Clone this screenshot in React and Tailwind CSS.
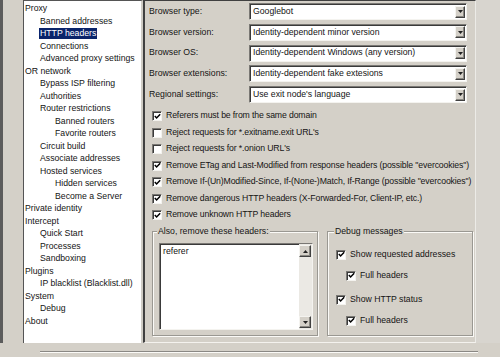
import React from "react";

// Arbol de opciones: [nivel, texto, seleccionado]
const tree = [
  [0, "Proxy"],
  [1, "Banned addresses"],
  [1, "HTTP headers", true],
  [1, "Connections"],
  [1, "Advanced proxy settings"],
  [0, "OR network"],
  [1, "Bypass ISP filtering"],
  [1, "Authorities"],
  [1, "Router restrictions"],
  [2, "Banned routers"],
  [2, "Favorite routers"],
  [1, "Circuit build"],
  [1, "Associate addresses"],
  [1, "Hosted services"],
  [2, "Hidden services"],
  [2, "Become a Server"],
  [0, "Private identity"],
  [0, "Intercept"],
  [1, "Quick Start"],
  [1, "Processes"],
  [1, "Sandboxing"],
  [0, "Plugins"],
  [1, "IP blacklist (Blacklist.dll)"],
  [0, "System"],
  [1, "Debug"],
  [0, "About"],
];

const indent = ["pl-[1px]", "pl-[16px]", "pl-[31px]"];

const selects = [
  ["Browser type:", "Googlebot"],
  ["Browser version:", "Identity-dependent minor version"],
  ["Browser OS:", "Identity-dependent Windows (any version)"],
  ["Browser extensions:", "Identity-dependent fake extesions"],
  ["Regional settings:", "Use exit node's language"],
];

const checks = [
  [true, "Referers must be from the same domain"],
  [false, "Reject requests for *.exitname.exit URL's"],
  [false, "Reject requests for *.onion URL's"],
  [true, 'Remove ETag and Last-Modified from response headers (possible "evercookies")'],
  [true, 'Remove If-(Un)Modified-Since, If-(None-)Match, If-Range (possible "evercookies")'],
  [true, "Remove dangerous HTTP headers (X-Forwarded-For, Client-IP, etc.)"],
  [true, "Remove unknown HTTP headers"],
];

const raised =
  "bg-[#d4d0c8] border border-t-[#f4f3ef] border-l-[#f4f3ef] border-r-[#404040] border-b-[#404040] shadow-[inset_-1px_-1px_0_#8a8882]";

const Check = ({ checked }) => (
  <span className="w-[10px] h-[10px] shrink-0 bg-white border border-t-[#7a7874] border-l-[#7a7874] border-r-[#f4f3ef] border-b-[#f4f3ef] shadow-[inset_1px_1px_0_#3a3a3a] flex items-center justify-center">
    {checked && (
      <svg width="7" height="7" viewBox="0 0 7 7">
        <path d="M0.8 3 L2.6 4.9 L6.2 1.2" stroke="#000" strokeWidth="1.5" fill="none" />
      </svg>
    )}
  </span>
);

const Arrow = ({ up }) => (
  <svg width="5" height="3" viewBox="0 0 5 3">
    <path d={up ? "M0 3 L2.5 0 L5 3 Z" : "M0 0 L5 0 L2.5 3 Z"} fill="#222" />
  </svg>
);

const Select = ({ value }) => (
  <div className="w-[218px] h-[17px] bg-white flex items-center border border-t-[#7a7874] border-l-[#7a7874] border-r-[#f4f3ef] border-b-[#f4f3ef] shadow-[inset_1px_1px_0_#3a3a3a]">
    <span className="flex-1 pl-[3px] whitespace-nowrap overflow-hidden">{value}</span>
    <span className={`w-[10px] h-[12px] mr-[1px] flex items-center justify-center ${raised}`}>
      <Arrow />
    </span>
  </div>
);

export default function App() {
  return (
    <div className="w-[500px] h-[357px] bg-[#d4d0c8] font-['Liberation_Sans',Arial,sans-serif] text-[8.7px] text-[#141414] overflow-hidden">
      <div className="flex h-[343px]">
        {/* Franja izquierda */}
        <div className="w-[23px] border-l-[3px] border-[#5c5c5c]" />

        {/* Arbol */}
        <div className="w-[120px] bg-white border-t border-l border-[#555] border-r-2 border-r-[#cfccc5] pt-[1px]">
          {tree.map(([level, label, active]) => (
            <div key={label} className={`h-[12.5px] leading-[12.5px] whitespace-nowrap ${indent[level]}`}>
              {active ? (
                <span className="inline-block bg-[#0a246a] text-white px-[1px] -ml-[1px] leading-[11px]">{label}</span>
              ) : (
                label
              )}
            </div>
          ))}
        </div>

        {/* Panel de opciones */}
        <div className="w-[333px] border-t border-l-2 border-[#404040] border-r border-r-[#ecebe7] border-b border-b-[#f4f2ee] pl-[4px] pt-[2px] flex flex-col">
          <div className="flex flex-col gap-[3.75px]">
            {selects.map(([label, value]) => (
              <div key={label} className="flex items-center h-[17px]">
                <span className="w-[100px]">{label}</span>
                <Select value={value} />
              </div>
            ))}
          </div>

          <div className="flex flex-col mt-[4.75px]">
            {checks.map(([checked, label]) => (
              <div key={label} className="h-[16.5px] flex items-center gap-[4px] ml-[3px] whitespace-nowrap">
                <Check checked={checked} />
                <span className="tracking-[-0.13px]">{label}</span>
              </div>
            ))}
          </div>

          <div className="flex gap-[9px] ml-[3px] mt-[3px]">
            <fieldset className="w-[166px] h-[110px] border border-[#9a9892] shadow-[inset_1px_1px_0_#fbfaf7,1px_1px_0_#fbfaf7]">
              <legend className="ml-[4px] px-[1px] leading-[10px] bg-[#d4d0c8]">Also, remove these headers:</legend>
              <div className="ml-[6px] mt-[7px] w-[154px] h-[87px] bg-white flex border border-t-[#7a7874] border-l-[#7a7874] border-r-[#f4f3ef] border-b-[#f4f3ef] shadow-[inset_1px_1px_0_#3a3a3a]">
                <div className="flex-1 pl-[3px] pt-[2px] leading-[10px]">referer</div>
                <div className="w-[13px] bg-[#ebe9e4] flex flex-col justify-between py-[1px] pr-[1px]">
                  <span className={`h-[12px] flex items-center justify-center ${raised}`}>
                    <Arrow up />
                  </span>
                  <span className={`h-[12px] flex items-center justify-center ${raised}`}>
                    <Arrow />
                  </span>
                </div>
              </div>
            </fieldset>

            <fieldset className="w-[146px] h-[110px] border border-[#9a9892] shadow-[inset_1px_1px_0_#fbfaf7,1px_1px_0_#fbfaf7]">
              <legend className="ml-[6px] px-[1px] leading-[10px] bg-[#d4d0c8]">Debug messages</legend>
              <div className="flex flex-col">
                <div className="h-[13px] mt-[12px] pl-[8px] flex items-center gap-[4px]">
                  <Check checked />
                  <span>Show requested addresses</span>
                </div>
                <div className="h-[13px] mt-[8px] pl-[18px] flex items-center gap-[4px]">
                  <Check checked />
                  <span>Full headers</span>
                </div>
                <div className="h-[13px] mt-[11px] pl-[8px] flex items-center gap-[4px]">
                  <Check checked />
                  <span>Show HTTP status</span>
                </div>
                <div className="h-[13px] mt-[8px] pl-[18px] flex items-center gap-[4px]">
                  <Check checked />
                  <span>Full headers</span>
                </div>
              </div>
            </fieldset>
          </div>
        </div>

        <div className="flex-1 bg-[#d8d5cf]" />
      </div>

      {/* Separador inferior */}
      <div className="mt-[8px] ml-[40px] w-[438px] border-t border-[#8a8884] border-b border-b-[#fbfaf7]" />
    </div>
  );
}
